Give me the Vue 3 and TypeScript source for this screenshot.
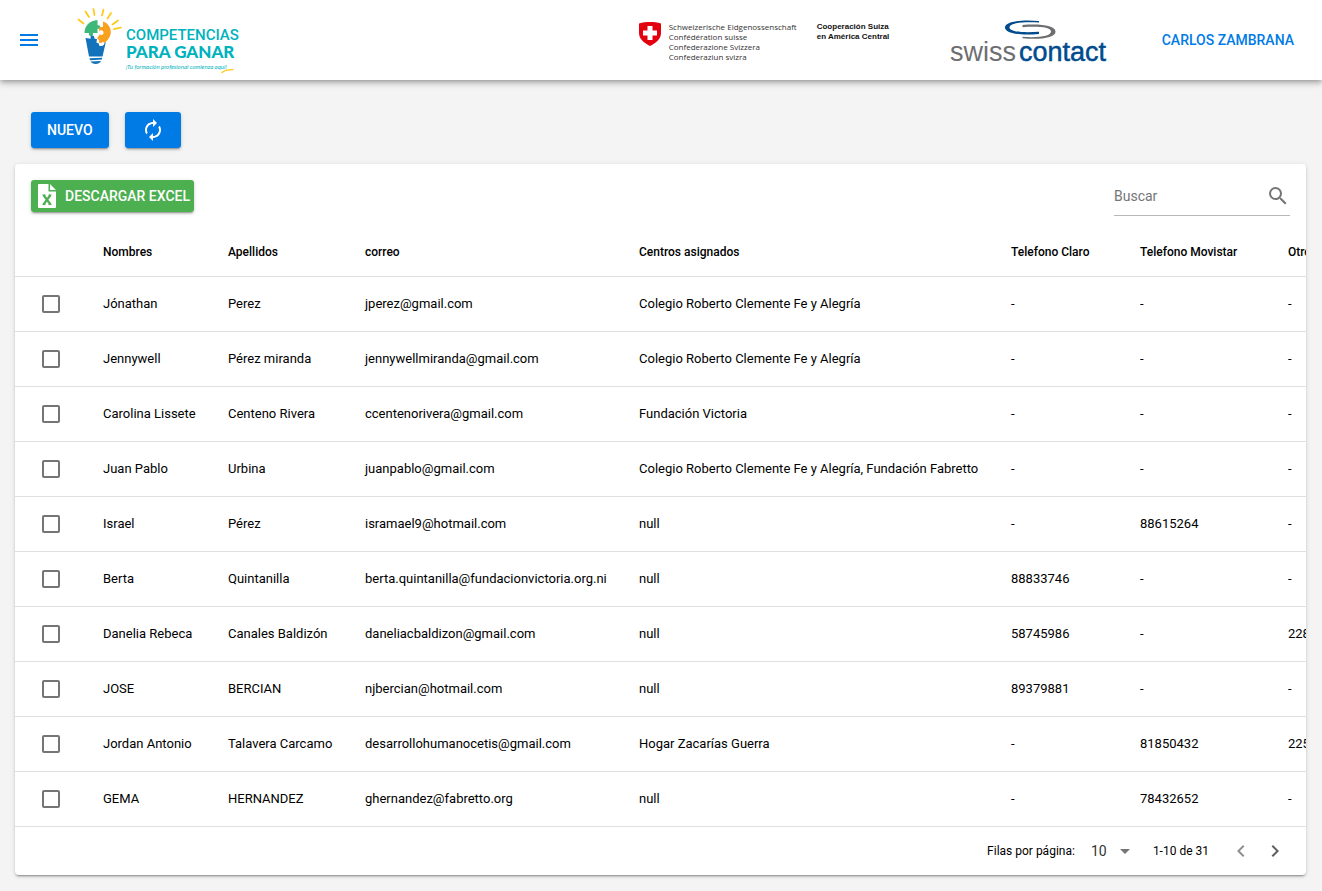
<script setup lang="ts">
import { computed, ref } from 'vue'

interface Persona {
  nombres: string
  apellidos: string
  correo: string
  centros: string
  claro: string
  movistar: string
  otro: string
}

const columnas: { clave: keyof Persona; titulo: string }[] = [
  { clave: 'nombres', titulo: 'Nombres' },
  { clave: 'apellidos', titulo: 'Apellidos' },
  { clave: 'correo', titulo: 'correo' },
  { clave: 'centros', titulo: 'Centros asignados' },
  { clave: 'claro', titulo: 'Telefono Claro' },
  { clave: 'movistar', titulo: 'Telefono Movistar' },
  { clave: 'otro', titulo: 'Otro' },
]

const clemente = 'Colegio Roberto Clemente Fe y Alegría'

const personas: Persona[] = [
  { nombres: 'Jónathan', apellidos: 'Perez', correo: 'jperez@gmail.com', centros: clemente, claro: '-', movistar: '-', otro: '-' },
  { nombres: 'Jennywell', apellidos: 'Pérez miranda', correo: 'jennywellmiranda@gmail.com', centros: clemente, claro: '-', movistar: '-', otro: '-' },
  { nombres: 'Carolina Lissete', apellidos: 'Centeno Rivera', correo: 'ccentenorivera@gmail.com', centros: 'Fundación Victoria', claro: '-', movistar: '-', otro: '-' },
  { nombres: 'Juan Pablo', apellidos: 'Urbina', correo: 'juanpablo@gmail.com', centros: clemente + ', Fundación Fabretto', claro: '-', movistar: '-', otro: '-' },
  { nombres: 'Israel', apellidos: 'Pérez', correo: 'isramael9@hotmail.com', centros: 'null', claro: '-', movistar: '88615264', otro: '-' },
  { nombres: 'Berta', apellidos: 'Quintanilla', correo: 'berta.quintanilla@fundacionvictoria.org.ni', centros: 'null', claro: '88833746', movistar: '-', otro: '-' },
  { nombres: 'Danelia Rebeca', apellidos: 'Canales Baldizón', correo: 'daneliacbaldizon@gmail.com', centros: 'null', claro: '58745986', movistar: '-', otro: '228' },
  { nombres: 'JOSE', apellidos: 'BERCIAN', correo: 'njbercian@hotmail.com', centros: 'null', claro: '89379881', movistar: '-', otro: '-' },
  { nombres: 'Jordan Antonio', apellidos: 'Talavera Carcamo', correo: 'desarrollohumanocetis@gmail.com', centros: 'Hogar Zacarías Guerra', claro: '-', movistar: '81850432', otro: '225' },
  { nombres: 'GEMA', apellidos: 'HERNANDEZ', correo: 'ghernandez@fabretto.org', centros: 'null', claro: '-', movistar: '78432652', otro: '-' },
]

const busqueda = ref('')
const seleccion = ref<string[]>([])

const visibles = computed(() => {
  const q = busqueda.value.trim().toLowerCase()
  return q ? personas.filter((p) => Object.values(p).some((v) => v.toLowerCase().includes(q))) : personas
})
</script>

<template>
  <div class="page">
    <header class="topbar">
      <button class="icon-btn menu" type="button" aria-label="Menú">
        <svg viewBox="0 0 24 24" width="24" height="24"><path d="M3 18h18v-2H3v2zm0-5h18v-2H3v2zm0-7v2h18V6H3z" /></svg>
      </button>

      <svg class="brand" viewBox="0 0 166 68" width="166" height="68" role="img" aria-label="Competencias para ganar">
        <path
          d="M1.500 13.500l5 4M8.500 5.500l3.500 5.500M16.500 3l1 6M26.500 3.500l-1.500 6M34 7l-3.500 5.500M41 14.500l-5.500 4M44 21.500l-7 1.700"
          stroke="#fcc917"
          stroke-width="1.700"
          stroke-linecap="round"
        />
        <path fill="#3db878" d="M7.500 27C7.500 20 12.500 14.500 20.500 14v5.300c3.600-1.200 3.800 4.600 0 3.400V27h-4.700c1.600 4.200-5.200 4.200-3.700 0z" />
        <path fill="#f9a11f" d="M26 15.500c4.800 1.500 7.800 5.500 7.800 10.500 0 4.500-3 8-6 11l-2.300-1.300c-1.400 2.800-4.800.8-3.200-1.700L20 32.500l2.800-4.300c2.500 2.200 5.700-1.300 2.500-3.600-1.700-1-2.900.4-3.300 1.200l.5-4.800H26z" />
        <path fill="#1272ba" d="M8.500 32l5.300.8c-1.700-4.300 4.400-4.600 3.500-.2l2.700.6-.6 3.600c2-.3 2.900 1.100 2.700 2.700 2.700 1.500 5.200 0 5.400-2.500l1.300-.8-3.300 14.300H12z" />
        <path fill="#1272ba" d="M12.500 52.300l12.500-.6v1.900l-12 .6zM13.500 55.500l10.500-.5c-1.500 3.700-8.500 4-10.500.5z" />
        <text class="brand-a" x="49" y="34">COMPETENCIAS</text>
        <text class="brand-b" x="49" y="52">PARA GANAR</text>
        <text class="brand-c" x="49" y="63">¡Tu formación profesional comienza aquí!</text>
        <path d="M145 66.500c3-2.600 7-3 11-2.800" fill="none" stroke="#fcc917" stroke-width="1.300" stroke-linecap="round" />
      </svg>

      <div class="partners">
        <div class="swiss">
          <svg viewBox="0 0 22 24" width="22" height="24" aria-hidden="true">
            <path fill="#e3000f" d="M0 1.500C7-.4 15-.4 22 1.500v9.500c0 6.500-6 10.500-11 13C6 21.500 0 17.500 0 11z" />
            <path fill="#fff" d="M8.500 4h5v4.500H18v5h-4.500V18h-5v-4.500H4v-5h4.500z" />
          </svg>
          <p class="confederation">
            Schweizerische Eidgenossenschaft<br />Confédération suisse<br />Confederazione Svizzera<br />Confederaziun svizra
          </p>
          <p class="cooperation">Cooperación Suiza<br />en América Central</p>
        </div>

        <svg class="contact" viewBox="0 -3 162 56" width="162" height="56" role="img" aria-label="swisscontact">
          <path fill="#004b8d" d="M90 6C70 4.300 56 7 56 12.500S70 21 90 19v-2.300C74 18 60.500 16.800 60.500 12.500S72 6.500 90 7.500z" />
          <path fill="#6d6e70" d="M73.500 10c18-1.300 33 .4 33 6.700 0 6-15 8.300-33 6.500v-1.400c16 1.200 28.500-.6 28.500-5.300 0-4.300-12.500-5.300-28.500-4.300z" />
          <text x="1" y="46" class="contact-a">swiss</text>
          <text x="70" y="46" class="contact-b">contact</text>
        </svg>

        <a class="user" href="#">CARLOS ZAMBRANA</a>
      </div>
    </header>

    <main>
      <div class="actions">
        <button class="btn primary" type="button">NUEVO</button>
        <button class="btn primary" type="button" aria-label="Actualizar">
          <svg viewBox="0 0 24 24" width="24" height="24"><path d="M12 6v3l4-4-4-4v3c-4.420 0-8 3.580-8 8 0 1.570.46 3.030 1.240 4.260L6.700 14.800A5.870 5.870 0 0 1 6 12c0-3.310 2.690-6 6-6zm6.760 1.740L17.300 9.200c.44.84.7 1.790.7 2.800 0 3.310-2.690 6-6 6v-3l-4 4 4 4v-3c4.420 0 8-3.580 8-8 0-1.570-.46-3.030-1.240-4.260z" /></svg>
        </button>
      </div>

      <section class="card">
        <div class="toolbar">
          <button class="btn excel" type="button">
            <svg viewBox="0 0 18 24" width="18" height="24" aria-hidden="true">
              <path fill="#fff" d="M1 0h9.500v7.500H18V23a1 1 0 0 1-1 1H1a1 1 0 0 1-1-1V1a1 1 0 0 1 1-1zM12 0l6 6h-6z" />
              <path d="M5.500 11l7 9.500M12.500 11l-7 9.500" stroke="#4caf50" stroke-width="2.200" />
              <path d="M4.500 11h3M10.500 11h3M4.500 20.500h3M10.500 20.500h3" stroke="#4caf50" stroke-width="1.200" />
            </svg>
            DESCARGAR EXCEL
          </button>
          <label class="search">
            <input v-model="busqueda" type="text" placeholder="Buscar" aria-label="Buscar" />
            <svg viewBox="0 0 24 24" width="24" height="24" aria-hidden="true"><path d="M15.500 14h-.79l-.28-.27A6.470 6.470 0 0 0 16 9.500 6.500 6.500 0 1 0 9.500 16c1.610 0 3.090-.59 4.230-1.570l.27.28v.79l5 4.990L20.490 19l-4.990-5zm-6 0C7.010 14 5 11.990 5 9.500S7.010 5 9.500 5 14 7.010 14 9.500 11.990 14 9.500 14z" /></svg>
          </label>
        </div>

        <div class="scroll">
          <table>
            <thead>
              <tr>
                <th class="col-check"></th>
                <th v-for="c in columnas" :key="c.clave" :class="'col-' + c.clave" scope="col">{{ c.titulo }}</th>
              </tr>
            </thead>
            <tbody>
              <tr v-for="p in visibles" :key="p.correo">
                <td class="col-check">
                  <input v-model="seleccion" type="checkbox" :value="p.correo" :aria-label="'Seleccionar ' + p.nombres" />
                </td>
                <td v-for="c in columnas" :key="c.clave" class="value">{{ p[c.clave] }}</td>
              </tr>
            </tbody>
          </table>
        </div>

        <footer class="pager">
          <label for="filas">Filas por página:</label>
          <span class="select">
            <select id="filas">
              <option>10</option>
              <option>25</option>
              <option>50</option>
            </select>
            <svg viewBox="0 0 10 5" width="10" height="5" aria-hidden="true"><path d="M0 0l5 5 5-5z" /></svg>
          </span>
          <span class="range">1-10 de 31</span>
          <button class="icon-btn prev" type="button" aria-label="Página anterior" disabled>
            <svg viewBox="0 0 24 24" width="24" height="24"><path d="M15.410 7.410L14 6l-6 6 6 6 1.410-1.410L10.830 12z" /></svg>
          </button>
          <button class="icon-btn next" type="button" aria-label="Página siguiente">
            <svg viewBox="0 0 24 24" width="24" height="24"><path d="M10 6L8.590 7.410 13.170 12l-4.580 4.590L10 18l6-6z" /></svg>
          </button>
        </footer>
      </section>
    </main>
  </div>
</template>

<style>
body {
  margin: 0;
  background: #f4f4f4;
}
</style>

<style scoped>
.page {
  font-family: Roboto, 'Liberation Sans', sans-serif;
  font-size: 13px;
  color: #000;
  padding-bottom: 16px;
  overflow: hidden;
}

button,
input,
select {
  font-family: inherit;
  color: inherit;
}

.topbar {
  display: flex;
  align-items: center;
  height: 80px;
  padding: 0 28px 0 17px;
  background: #fff;
  box-shadow: 0 2px 4px -1px rgba(0, 0, 0, 0.2), 0 4px 5px rgba(0, 0, 0, 0.14), 0 1px 10px rgba(0, 0, 0, 0.12);
}

.icon-btn {
  display: flex;
  padding: 0;
  border: 0;
  background: none;
  cursor: pointer;
}

.icon-btn svg {
  fill: currentColor;
}

.menu {
  color: #007be6;
}

.brand {
  margin-left: 36px;
}

.brand-a,
.brand-b,
.brand-c {
  fill: #00b2bd;
}

.brand-a {
  font: 500 15px Roboto, sans-serif;
}

.brand-b {
  font: 900 17px Lato, sans-serif;
}

.brand-c {
  font: italic 400 6px Lato, sans-serif;
}

.partners {
  display: flex;
  align-items: center;
  margin-left: auto;
}

.swiss {
  display: flex;
  align-items: flex-start;
  margin-top: 3px;
}

.swiss p {
  margin: 0;
  white-space: nowrap;
}

.confederation {
  width: 128px;
  padding-left: 8px;
  font: 400 8px/10px 'Open Sans', sans-serif;
  color: #333;
}

.swiss .cooperation {
  width: 72px;
  margin-left: 20px;
  font: 700 8px/10px 'Liberation Sans', Arial, sans-serif;
  color: #111;
}

.contact {
  margin-left: 60px;
}

.contact-a,
.contact-b {
  font: 400 27px 'Liberation Sans', Arial, sans-serif;
  fill: #6d6e70;
}

.contact-b {
  fill: #004b8d;
  stroke: #004b8d;
  stroke-width: 0.5px;
}

.user {
  margin-left: 51px;
  font-size: 14px;
  font-weight: 500;
  color: #007be6;
  text-decoration: none;
  white-space: nowrap;
}

main {
  padding: 32px 16px 0 15px;
}

.actions {
  display: flex;
  gap: 16px;
  padding: 0 16px 16px;
}

.btn {
  display: flex;
  align-items: center;
  justify-content: center;
  height: 36px;
  padding: 0 16px;
  border: 0;
  border-radius: 3px;
  font-size: 14px;
  font-weight: 500;
  color: #fff;
  cursor: pointer;
  box-shadow: 0 3px 1px -2px rgba(0, 0, 0, 0.2), 0 2px 2px rgba(0, 0, 0, 0.14), 0 1px 5px rgba(0, 0, 0, 0.12);
}

.primary {
  background: #007be6;
}

.primary svg {
  fill: #fff;
}

.excel {
  gap: 9px;
  height: 32px;
  padding: 0 4px 0 7px;
  background: #4caf50;
}

.card {
  border-radius: 4px;
  background: #fff;
  box-shadow: 0 3px 1px -2px rgba(0, 0, 0, 0.2), 0 2px 2px rgba(0, 0, 0, 0.14), 0 1px 5px rgba(0, 0, 0, 0.12);
}

.toolbar {
  display: flex;
  align-items: center;
  justify-content: space-between;
  height: 64px;
  padding: 0 16px;
}

.search {
  display: flex;
  align-items: center;
  width: 176px;
  height: 39px;
  border-bottom: 1px solid #b8b8b8;
}

.search input {
  flex: 1;
  min-width: 0;
  padding: 0;
  border: 0;
  outline: 0;
  background: none;
  font-size: 14px;
}

.search input::placeholder {
  color: #757575;
  opacity: 1;
}

.search svg {
  fill: #757575;
}

.scroll {
  overflow-x: auto;
  scrollbar-width: none;
}

table {
  min-width: 100%;
  border-collapse: separate;
  border-spacing: 0;
}

th,
td {
  box-sizing: border-box;
  padding: 0 32px 0 0;
  border-bottom: 1px solid #e0e0e0;
  text-align: left;
  white-space: nowrap;
}

th {
  height: 49px;
  font-size: 12px;
  font-weight: 500;
}

td {
  height: 55px;
}

td.value {
  padding-bottom: 2px;
}

.col-check {
  min-width: 88px;
  padding-left: 27px;
}

.col-nombres {
  min-width: 125px;
}

.col-apellidos {
  min-width: 137px;
}

.col-correo {
  min-width: 274px;
}

.col-centros {
  min-width: 372px;
}

.col-claro {
  min-width: 129px;
}

.col-movistar {
  min-width: 148px;
}

.col-otro {
  min-width: 100px;
}

td input {
  appearance: none;
  display: block;
  width: 18px;
  height: 18px;
  margin: 0;
  border: 2px solid #757575;
  border-radius: 2px;
}

td input:checked {
  border-color: #007be6;
  background: #007be6;
}

.pager {
  display: flex;
  align-items: center;
  justify-content: flex-end;
  height: 48px;
  padding-right: 19px;
  font-size: 12px;
}

.select {
  display: flex;
  align-items: center;
  margin-left: 16px;
}

.select select {
  appearance: none;
  width: 29px;
  padding: 0;
  border: 0;
  background: none;
  font-size: 14px;
  color: #333;
}

.select svg {
  fill: #757575;
}

.range {
  margin: 0 20px 0 23px;
}

.prev {
  margin-right: 10px;
  color: #8f8f8f;
}

.next {
  color: #5f5f5f;
}
</style>
